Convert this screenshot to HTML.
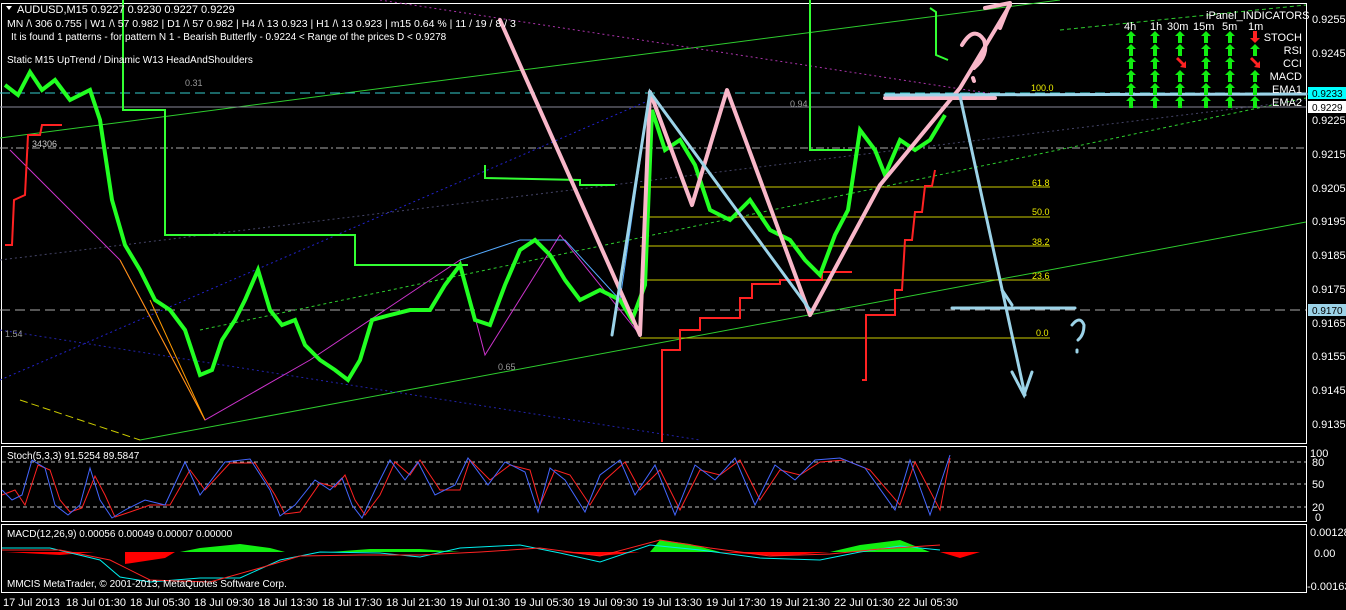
<!DOCTYPE html>
<html><head><meta charset="utf-8"><style>
html,body{margin:0;padding:0;background:#000;width:1346px;height:610px;overflow:hidden}
svg text{font-family:"Liberation Sans",sans-serif;font-size:11px;fill:#fff}
</style></head><body>
<svg width="1346" height="610" viewBox="0 0 1346 610" xmlns="http://www.w3.org/2000/svg">
<defs>
<polygon id="up" points="0,-6 5,-1 2,-1 2,6 -2,6 -2,-1 -5,-1" fill="#1e1"/>
<polygon id="dn" points="0,6 5,1 2,1 2,-6 -2,-6 -2,1 -5,1" fill="#f22"/>
<polygon id="dr" points="5,5 5,-2 3,0 -3,-6 -5,-4 1,2 -1,4" fill="#f22"/>
</defs>
<rect width="1346" height="610" fill="#000"/>
<g stroke="#fff" stroke-width="1" fill="none">
<rect x="1.5" y="3.5" width="1305" height="440"/>
<rect x="1.5" y="446.5" width="1305" height="75"/>
<rect x="1.5" y="524.5" width="1305" height="68"/>
</g>
<g fill="none" stroke-width="1">
<line x1="0" y1="138" x2="1060" y2="0" stroke="#2ecc2e"/>
<line x1="140" y1="440" x2="1306" y2="222" stroke="#2ecc2e"/>
<line x1="200" y1="330" x2="1306" y2="98" stroke="#2ecc2e" stroke-dasharray="3,3"/>
<line x1="1060" y1="30" x2="1306" y2="5" stroke="#2ecc2e" stroke-dasharray="4,3"/>
<line x1="0" y1="93" x2="1306" y2="93" stroke="#3cc" stroke-dasharray="10,5"/>
<line x1="0" y1="310" x2="1306" y2="310" stroke="#aaa" stroke-dasharray="10,5"/>
<line x1="0" y1="107" x2="1306" y2="107" stroke="#889"/>
<line x1="0" y1="148" x2="1306" y2="148" stroke="#aaa" stroke-dasharray="8,3,2,3"/>
<line x1="0" y1="380" x2="650" y2="100" stroke="#22c" stroke-dasharray="2,3"/>
<line x1="0" y1="260" x2="1306" y2="100" stroke="#446" stroke-dasharray="2,3"/>
<line x1="380" y1="0" x2="1000" y2="95" stroke="#a3a" stroke-dasharray="2,3"/>
<line x1="0" y1="330" x2="700" y2="440" stroke="#22a" stroke-dasharray="2,3"/>
<line x1="20" y1="400" x2="140" y2="440" stroke="#cc0" stroke-dasharray="8,4"/>
</g>
<g stroke="#cc0" stroke-width="1">
<line x1="640" y1="187" x2="1050" y2="187"/><line x1="640" y1="217" x2="1050" y2="217"/>
<line x1="640" y1="246" x2="1050" y2="246"/><line x1="640" y1="280" x2="1050" y2="280"/>
<line x1="640" y1="338" x2="1050" y2="338"/>
</g>
<text x="1031" y="91" style="font-size:9px;fill:#ee0">100.0</text>
<text x="1032" y="186" style="font-size:9px;fill:#ee0">61.8</text><text x="1032" y="215" style="font-size:9px;fill:#ee0">50.0</text>
<text x="1032" y="245" style="font-size:9px;fill:#ee0">38.2</text><text x="1032" y="279" style="font-size:9px;fill:#ee0">23.6</text>
<text x="1036" y="336" style="font-size:9px;fill:#ee0">0.0</text>
<text x="185" y="86" style="font-size:9px;fill:#999">0.31</text><text x="790" y="107" style="font-size:9px;fill:#999">0.94</text>
<text x="498" y="370" style="font-size:9px;fill:#999">0.65</text><text x="5" y="337" style="font-size:9px;fill:#999">1.54</text>
<text x="32" y="147" style="font-size:9px;fill:#ccc">34306</text>
<polyline fill="none" stroke="#c3c" stroke-width="1" points="10,150 120,260 205,420 310,360 460,260 485,355 560,235 640,335 650,92"/>
<polyline fill="none" stroke="#f90" stroke-width="1" points="120,260 205,420 150,300"/>
<polyline fill="none" stroke="#5af" stroke-width="1" points="460,260 520,240 565,240 620,300 650,92"/>
<polyline fill="none" stroke="#3f3" stroke-width="2" points="123,0 123,110 165,110 165,235 355,235 355,265 468,265"/>
<polyline fill="none" stroke="#3f3" stroke-width="2" points="485,165 485,178 580,180 580,185 615,185"/>
<polyline fill="none" stroke="#3f3" stroke-width="2" points="810,0 810,150 852,150"/>
<polyline fill="none" stroke="#3f3" stroke-width="2" points="930,8 936,12 936,55 948,60"/>
<polyline fill="none" stroke="#f22" stroke-width="2" points="5,245 12,245 14,200 25,195 28,135 40,135 42,125 62,125"/>
<polyline fill="none" stroke="#f22" stroke-width="2" points="662,442 662,350 680,350 680,330 700,330 700,318 740,318 740,298 752,298 752,284 780,284 780,280 822,280 822,272 852,272"/>
<polyline fill="none" stroke="#f22" stroke-width="2" points="862,380 866,380 866,315 895,315 895,290 902,290 905,240 912,240 915,212 922,212 925,186 932,186 935,170"/>
<polyline fill="none" stroke="#2f2" stroke-width="4" points="5,85 18,95 30,72 42,90 55,80 70,100 90,90 100,120 112,200 125,245 140,270 155,300 170,310 185,330 200,375 212,370 222,340 235,320 245,300 258,270 270,310 282,325 295,320 305,345 320,360 335,370 348,380 360,360 372,320 390,315 410,310 430,310 445,285 460,265 475,320 490,325 505,285 520,250 535,240 550,255 565,280 580,300 600,290 620,300 632,320 645,285 652,110 665,150 680,140 695,165 710,210 730,220 750,200 770,230 790,240 805,260 820,275 835,235 848,210 860,130 875,150 885,175 900,140 915,150 930,140 945,115"/>
<g fill="none" stroke="#f9b7c9" stroke-width="4" stroke-linecap="round" stroke-linejoin="round">
<polyline points="500,20 640,335 650,92 692,205 727,90 810,315 880,185 960,88 1010,5"/>
<polyline points="985,8 1010,3 1000,28"/>
<path d="M962,45 q12,-20 22,-5 q5,15 -10,28 M973,78 l1,3"/>
<line x1="885" y1="98" x2="995" y2="98"/>
</g>
<g fill="none" stroke="#9cd3e8" stroke-width="3" stroke-linecap="round">
<polyline points="612,335 650,92 810,310"/>
<line x1="960" y1="96" x2="1025" y2="395"/>
<polyline points="1012,372 1024,395 1032,372"/>
<line x1="952" y1="308" x2="1075" y2="308"/>
<line x1="1002" y1="290" x2="1012" y2="305"/>
<line x1="885" y1="95" x2="1306" y2="94"/>
<path d="M1072,325 q8,-10 12,0 q0,10 -6,15 M1077,350 l0,2"/>
</g>
<path d="M6,6 l6,0 l-3,4z" fill="#fff"/>
<text x="17" y="13">AUDUSD,M15  0.9227 0.9230 0.9227 0.9229</text>
<text x="7" y="27" style="font-size:10.5px">MN /\ 306   0.755 |  W1 /\ 57   0.982 |  D1 /\ 57   0.982 |  H4 /\ 13   0.923 |  H1 /\ 13   0.923 |  m15  0.64 %  | 11 / 19 / 8 / 3</text>
<text x="11" y="40" style="font-size:10px">It is found 1 patterns  -  for pattern N 1 - Bearish Butterfly - 0.9224 &lt; Range of the prices D &lt; 0.9278</text>
<text x="7" y="63" style="font-size:10px">Static  M15   UpTrend  /  Dinamic  W13   HeadAndShoulders</text>
<text x="1206" y="19">iPanel_INDICATORS</text>
<text x="1124" y="30">4h</text><text x="1150" y="30">1h</text><text x="1167" y="30">30m</text><text x="1193" y="30">15m</text><text x="1222" y="30">5m</text><text x="1248" y="30">1m</text>
<g text-anchor="end"><text x="1302" y="41">STOCH</text><text x="1302" y="54">RSI</text><text x="1302" y="67">CCI</text><text x="1302" y="80">MACD</text><text x="1302" y="93">EMA1</text><text x="1302" y="106">EMA2</text></g>
<g>
<use href="#up" x="1131" y="37"/><use href="#up" x="1155" y="37"/><use href="#up" x="1180" y="37"/><use href="#up" x="1206" y="37"/><use href="#up" x="1230" y="37"/><use href="#dn" x="1255" y="37"/>
<use href="#up" x="1131" y="50"/><use href="#up" x="1155" y="50"/><use href="#up" x="1180" y="50"/><use href="#up" x="1206" y="50"/><use href="#up" x="1230" y="50"/><use href="#up" x="1255" y="50"/>
<use href="#up" x="1131" y="63"/><use href="#up" x="1155" y="63"/><use href="#dr" x="1181" y="63"/><use href="#up" x="1206" y="63"/><use href="#up" x="1230" y="63"/><use href="#dr" x="1255" y="63"/>
<use href="#up" x="1131" y="76"/><use href="#up" x="1155" y="76"/><use href="#up" x="1180" y="76"/><use href="#up" x="1206" y="76"/><use href="#up" x="1230" y="76"/><use href="#up" x="1255" y="76"/>
<use href="#up" x="1131" y="89"/><use href="#up" x="1155" y="89"/><use href="#up" x="1180" y="89"/><use href="#up" x="1206" y="89"/><use href="#up" x="1230" y="89"/><use href="#up" x="1255" y="89"/>
<use href="#up" x="1131" y="102"/><use href="#up" x="1155" y="102"/><use href="#up" x="1180" y="102"/><use href="#up" x="1206" y="102"/><use href="#up" x="1230" y="102"/><use href="#up" x="1255" y="102"/>
</g>
<g style="font-size:10px">
<text x="1312" y="23">0.9255</text><text x="1312" y="57">0.9245</text><text x="1312" y="124">0.9225</text>
<text x="1312" y="158">0.9215</text><text x="1312" y="192">0.9205</text><text x="1312" y="225">0.9195</text><text x="1312" y="259">0.9185</text>
<text x="1312" y="293">0.9175</text><text x="1312" y="327">0.9165</text><text x="1312" y="360">0.9155</text><text x="1312" y="394">0.9145</text><text x="1312" y="428">0.9135</text>
</g>
<rect x="1308" y="87" width="38" height="12" fill="#0ff"/><text x="1312" y="97" style="font-size:10px;fill:#000">0.9233</text>
<rect x="1308" y="101" width="38" height="12" fill="#fff"/><text x="1312" y="111" style="font-size:10px;fill:#000">0.9229</text>
<rect x="1308" y="304" width="38" height="12" fill="#9cd3e8"/><text x="1312" y="314" style="font-size:10px;fill:#000">0.9170</text>
<g stroke="#bbb" stroke-dasharray="4,3"><line x1="2" y1="462" x2="1306" y2="462"/><line x1="2" y1="484" x2="1306" y2="484"/><line x1="2" y1="507" x2="1306" y2="507"/></g>
<text x="7" y="459" style="font-size:10px">Stoch(5,3,3) 91.5254 89.5847</text>
<polyline fill="none" stroke="#f22" stroke-width="1" points="2,495 15,490 25,505 38,465 50,470 60,500 70,512 82,508 95,476 105,495 115,517 130,512 150,505 170,505 190,470 205,490 230,463 255,463 275,495 285,514 300,512 320,483 335,487 345,475 355,500 365,515 380,495 395,462 410,475 420,460 440,490 460,490 470,460 490,480 510,465 530,470 540,505 555,470 570,475 590,505 605,480 625,462 640,490 660,470 680,510 700,470 720,475 740,460 760,500 780,470 800,475 820,462 845,460 870,470 900,505 915,462 940,510 950,458"/>
<polyline fill="none" stroke="#46f" stroke-width="1" points="2,490 12,500 22,495 32,460 45,468 55,505 68,515 80,505 90,468 100,500 112,518 125,510 145,500 165,505 185,462 200,495 225,462 250,459 270,490 280,516 295,505 315,480 330,490 342,478 352,505 362,518 375,490 390,460 405,480 418,462 435,495 455,485 468,458 488,485 505,462 525,472 538,512 550,468 565,480 585,512 600,475 620,460 635,495 655,465 675,515 695,465 715,480 735,458 755,505 775,465 795,480 815,460 840,458 865,468 895,510 910,460 930,515 950,455"/>
<g style="font-size:9px"><text x="1310" y="457">100</text><text x="1312" y="466">80</text><text x="1312" y="488">50</text><text x="1312" y="511">20</text><text x="1315" y="521">0</text></g>
<text x="7" y="537" style="font-size:10px">MACD(12,26,9) 0.00056 0.00049 0.00007 0.00000</text>
<path d="M100,552 L125,552 L125,564 L165,558 L175,552 Z" fill="#f00"/>
<path d="M180,552 L200,548 L240,544 L270,548 L285,552Z M650,552 L660,540 L690,544 L720,552Z M830,552 L860,545 L900,540 L930,552Z M330,552 L370,549 L420,549 L460,552Z" fill="#1e1"/>
<path d="M560,552 L600,556 L640,552Z M720,552 L780,556 L830,552Z M5,552 L60,555 L95,552Z M940,552 L960,558 L980,552Z" fill="#f00"/>
<polyline fill="none" stroke="#0ee" stroke-width="1" points="2,548 50,548 100,560 120,577 150,582 200,578 240,578 280,560 320,552 380,553 420,557 460,548 520,545 560,553 600,562 650,545 700,550 760,558 820,560 860,552 900,546 940,550"/>
<polyline fill="none" stroke="#f22" stroke-width="1" points="2,550 60,550 110,560 150,580 210,582 260,568 300,556 360,555 420,555 480,552 540,548 600,556 660,540 710,548 770,556 830,554 880,549 940,545"/>
<g style="font-size:9px"><text x="1310" y="536">0.00128</text><text x="1314" y="557">0.00</text><text x="1307" y="590">-0.00163</text></g>
<text x="7" y="587" style="font-size:10px">MMCIS MetaTrader, © 2001-2013, MetaQuotes Software Corp.</text>
<g style="font-size:10px">
<text x="3" y="606">17 Jul 2013</text><text x="66" y="606">18 Jul 01:30</text><text x="130" y="606">18 Jul 05:30</text><text x="194" y="606">18 Jul 09:30</text>
<text x="258" y="606">18 Jul 13:30</text><text x="322" y="606">18 Jul 17:30</text><text x="386" y="606">18 Jul 21:30</text><text x="450" y="606">19 Jul 01:30</text>
<text x="514" y="606">19 Jul 05:30</text><text x="578" y="606">19 Jul 09:30</text><text x="642" y="606">19 Jul 13:30</text><text x="706" y="606">19 Jul 17:30</text>
<text x="770" y="606">19 Jul 21:30</text><text x="834" y="606">22 Jul 01:30</text><text x="898" y="606">22 Jul 05:30</text>
</g>
</svg>
</body></html>
